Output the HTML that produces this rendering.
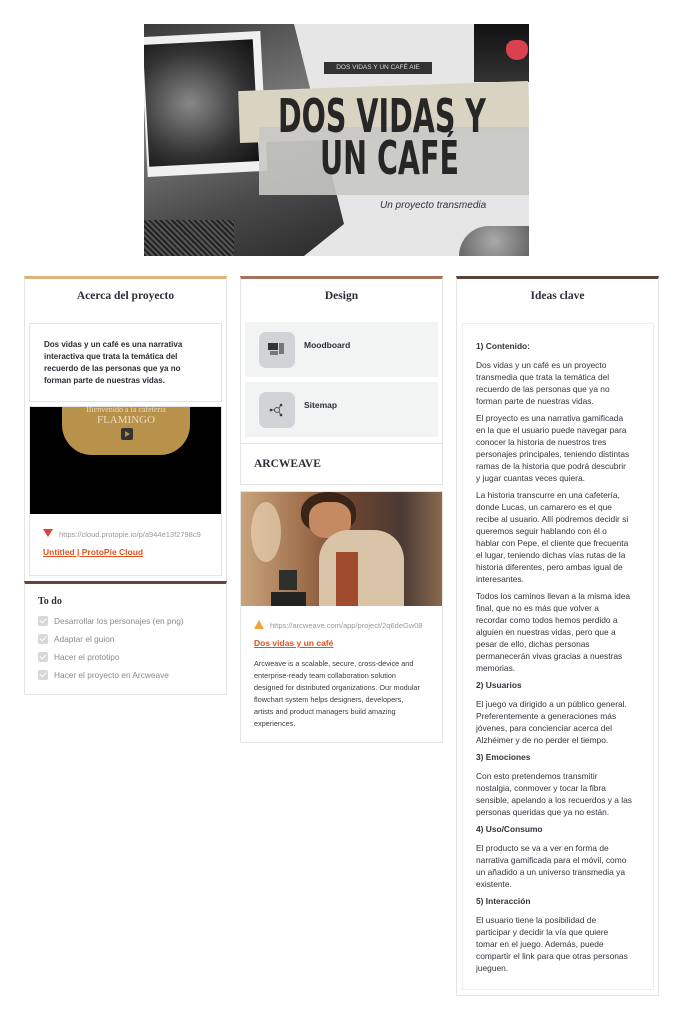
<!DOCTYPE html>
<html><head><meta charset="utf-8"><style>
*{margin:0;padding:0;box-sizing:border-box}
body{width:682px;height:1018px;background:#fff;position:relative;font-family:"Liberation Sans",sans-serif;color:#2a2c33;overflow:hidden}
.a{position:absolute}
.card{position:absolute;background:#fff;border:1px solid #e4e4e4}
.h{font-family:"Liberation Serif",serif;font-weight:bold;font-size:11.5px;text-align:center;color:#2d2f38}
.t{font-size:8.4px;line-height:12px;white-space:nowrap;color:#33353c}
.t p{margin-bottom:5px}
.t b{display:block;margin-bottom:7px;margin-top:0}
.todo{font-size:8.3px;color:#8a8a8a;white-space:nowrap}
.cb{display:inline-block;width:10px;height:10px;background:#d8d8d8;border-radius:2px;vertical-align:middle;margin-right:6px;position:relative;top:-1px}
.cb:after{content:"";position:absolute;left:3px;top:1px;width:3px;height:5px;border:solid #fff;border-width:0 1.5px 1.5px 0;transform:rotate(45deg)}
.big{font-family:'DejaVu Sans',sans-serif;font-weight:bold;font-size:46px;line-height:44px;color:#262626;transform:scaleX(.62);transform-origin:left;white-space:nowrap}
</style></head><body>

<!-- Banner -->
<div class="a" style="left:144px;top:24px;width:385px;height:232px;background:#e6e6e6;overflow:hidden">
  <div class="a" style="left:0;top:0;width:200px;height:232px;background:linear-gradient(160deg,#3a3a3a,#777 40%,#4a4a4a 70%,#2a2a2a);clip-path:polygon(0 0,150px 0,200px 200px,160px 232px,0 232px)"></div>
  <div class="a" style="left:0;top:10px;width:120px;height:140px;background:#f0f0f0;transform:rotate(-3deg)"></div>
  <div class="a" style="left:2px;top:18px;width:110px;height:122px;background:radial-gradient(ellipse at 40% 50%,#888,#333 60%,#111);transform:rotate(-3deg)"></div>
  <div class="a" style="left:0;top:196px;width:90px;height:36px;background:repeating-linear-gradient(45deg,#222 0 2px,#555 2px 4px)"></div>
  <div class="a" style="right:0;top:0;width:55px;height:58px;background:linear-gradient(180deg,#111,#333)"></div>
  <div class="a" style="left:362px;top:16px;width:22px;height:20px;background:#d94050;border-radius:40% 40% 50% 50%"></div>
  <div class="a" style="right:0;bottom:0;width:70px;height:30px;background:radial-gradient(circle,#aaa,#666);border-radius:40px 0 0 0"></div>
  <div class="a" style="left:180px;top:38px;width:108px;height:12px;background:#333;color:#ddd;font-size:6.5px;line-height:12px;text-align:center">DOS VIDAS Y UN CAFÉ AIE</div>
  <div class="a" style="left:95px;top:62px;width:290px;height:52px;background:#d9d4c2;transform:rotate(-2deg)"></div>
  <div class="a" style="left:115px;top:103px;width:270px;height:68px;background:#c8c8c4;opacity:.9"></div>
  <div class="a big" style="left:134px;top:70px">DOS VIDAS Y</div>
  <div class="a big" style="left:176px;top:112px">UN CAFÉ</div>
  <div class="a" style="left:236px;top:176px;font-size:10px;color:#333;white-space:nowrap;font-style:italic">Un proyecto transmedia</div>
</div>

<!-- Column 1 -->
<div class="card" style="left:24px;top:276px;width:203px;height:307px;border-top:3px solid #dbb37c">
  <div class="h" style="margin-top:11px">Acerca del proyecto</div>
</div>
<div class="card" style="left:29px;top:323px;width:193px;height:79px"></div>
<div class="a" style="left:44px;top:339px;font-size:8px;font-weight:bold;line-height:12px;white-space:nowrap;color:#2a2c33">Dos vidas y un café es una narrativa<br>interactiva que trata la temática del<br>recuerdo de las personas que ya no<br>forman parte de nuestras vidas.</div>
<div class="card" style="left:29px;top:406px;width:193px;height:170px"></div>
<div class="a" style="left:30px;top:407px;width:191px;height:107px;background:#000;overflow:hidden">
  <div class="a" style="left:32px;top:-10px;width:128px;height:58px;background:#b8914a;border-radius:0 0 30px 30px"></div>
  <div class="a" style="left:32px;top:-2px;width:128px;text-align:center;color:#ecdcb8;font-family:'Liberation Serif',serif;font-size:8px;line-height:10px">Bienvenido a la cafetería<br><span style="font-size:11px">FLAMINGO</span></div>
  <div class="a" style="left:91px;top:21px;width:12px;height:12px;background:#333;border-radius:2px"></div>
  <div class="a" style="left:95px;top:24px;width:0;height:0;border-left:5px solid #b8914a;border-top:3px solid transparent;border-bottom:3px solid transparent"></div>
</div>
<div class="a" style="left:43px;top:529px;width:0;height:0;border-left:5px solid transparent;border-right:5px solid transparent;border-top:8px solid #e0403a"></div>
<div class="a" style="left:59px;top:530px;font-size:7.5px;color:#999;white-space:nowrap;width:150px;overflow:hidden">https://cloud.protopie.io/p/a944e13f2798c9</div>
<div class="a" style="left:43px;top:547px;font-size:8.5px;color:#e0531f;text-decoration:underline;font-weight:bold">Untitled | ProtoPie Cloud</div>
<div class="card" style="left:24px;top:581px;width:203px;height:114px;border-top:3px solid #6a4438"></div>
<div class="a" style="left:38px;top:596px;font-family:'Liberation Serif',serif;font-weight:bold;font-size:10px;color:#2d2f38">To do</div>
<div class="a todo" style="left:38px;top:616px"><span class="cb"></span>Desarrollar los personajes (en png)</div>
<div class="a todo" style="left:38px;top:634px"><span class="cb"></span>Adaptar el guion</div>
<div class="a todo" style="left:38px;top:652px"><span class="cb"></span>Hacer el prototipo</div>
<div class="a todo" style="left:38px;top:670px"><span class="cb"></span>Hacer el proyecto en Arcweave</div>

<!-- Column 2 -->
<div class="card" style="left:240px;top:276px;width:203px;height:168px;border-top:3px solid #a8735e">
  <div class="h" style="margin-top:11px">Design</div>
</div>
<div class="a" style="left:245px;top:322px;width:193px;height:55px;background:#f2f3f3"></div>
<div class="a" style="left:259px;top:332px;width:36px;height:36px;background:#d2d3d6;border-radius:7px"></div>
<div class="a" style="left:268px;top:343px;width:10px;height:7px;background:#333"></div>
<div class="a" style="left:279px;top:343px;width:5px;height:11px;background:#777"></div>
<div class="a" style="left:270px;top:351px;width:8px;height:4px;background:#777"></div>
<div class="a" style="left:304px;top:340px;font-size:8.5px;font-weight:bold;color:#2d2f38">Moodboard</div>
<div class="a" style="left:245px;top:382px;width:193px;height:55px;background:#f2f3f3"></div>
<div class="a" style="left:259px;top:392px;width:36px;height:36px;background:#d2d3d6;border-radius:7px"></div>
<svg class="a" style="left:267px;top:400px" width="20" height="20" viewBox="0 0 20 20"><circle cx="10" cy="10" r="2.5" fill="none" stroke="#555" stroke-width="1"/><g fill="#333"><circle cx="4" cy="10" r="1.3"/><circle cx="14" cy="5" r="1.3"/><circle cx="14" cy="15" r="1.3"/></g><path d="M5 10h3M12 8l2-3M12 12l2 3" stroke="#555"/></svg>
<div class="a" style="left:304px;top:400px;font-size:8.5px;font-weight:bold;color:#2d2f38">Sitemap</div>
<div class="card" style="left:240px;top:443px;width:203px;height:42px"></div>
<div class="a" style="left:254px;top:458px;font-family:'Liberation Serif',serif;font-weight:bold;font-size:11.5px;color:#2d2f38">ARCWEAVE</div>
<div class="card" style="left:240px;top:491px;width:203px;height:252px"></div>
<div class="a" style="left:241px;top:492px;width:201px;height:114px;background:linear-gradient(90deg,#c9a47c 0%,#a2724e 30%,#6b4430 55%,#4b3a34 80%,#8a6a4e 100%);overflow:hidden">
  <div class="a" style="left:60px;top:0;width:55px;height:40px;background:#3a2418;border-radius:50% 50% 40% 40%"></div>
  <div class="a" style="left:68px;top:10px;width:42px;height:36px;background:#c58a62;border-radius:40%"></div>
  <div class="a" style="left:78px;top:38px;width:85px;height:76px;background:#d9c4a8;border-radius:30px 30px 0 0"></div>
  <div class="a" style="left:95px;top:60px;width:22px;height:54px;background:#a04a2e"></div>
  <div class="a" style="left:38px;top:78px;width:18px;height:20px;background:#2e302c"></div>
  <div class="a" style="left:30px;top:100px;width:35px;height:14px;background:#23241f"></div>
  <div class="a" style="left:10px;top:10px;width:30px;height:60px;background:#efdcc0;opacity:.6;border-radius:50%"></div>
</div>
<div class="a" style="left:254px;top:620px;width:0;height:0;border-left:5px solid transparent;border-right:5px solid transparent;border-bottom:9px solid #f0a43a"></div>
<div class="a" style="left:270px;top:621px;font-size:7.5px;color:#999;white-space:nowrap;width:160px;overflow:hidden">https://arcweave.com/app/project/2q6deGw08</div>
<div class="a" style="left:254px;top:638px;font-size:8.5px;color:#e0531f;text-decoration:underline;font-weight:bold">Dos vidas y un café</div>
<div class="a" style="left:254px;top:658px;font-size:7.3px;line-height:12px;color:#3a3c44;white-space:nowrap">Arcweave is a scalable, secure, cross-device and<br>enterprise-ready team collaboration solution<br>designed for distributed organizations. Our modular<br>flowchart system helps designers, developers,<br>artists and product managers build amazing<br>experiences.</div>

<!-- Column 3 -->
<div class="card" style="left:456px;top:276px;width:203px;height:720px;border-top:3px solid #5a4238">
  <div class="h" style="margin-top:11px">Ideas clave</div>
</div>
<div class="card" style="left:462px;top:323px;width:192px;height:667px;border-color:#eee"></div>
<div class="a t" style="left:476px;top:340px">
<b>1) Contenido:</b>
<p>Dos vidas y un café es un proyecto<br>transmedia que trata la temática del<br>recuerdo de las personas que ya no<br>forman parte de nuestras vidas.</p>
<p>El proyecto es una narrativa gamificada<br>en la que el usuario puede navegar para<br>conocer la historia de nuestros tres<br>personajes principales, teniendo distintas<br>ramas de la historia que podrá descubrir<br>y jugar cuantas veces quiera.</p>
<p>La historia transcurre en una cafetería,<br>donde Lucas, un camarero es el que<br>recibe al usuario. Allí podremos decidir si<br>queremos seguir hablando con él o<br>hablar con Pepe, el cliente que frecuenta<br>el lugar, teniendo dichas vías rutas de la<br>historia diferentes, pero ambas igual de<br>interesantes.</p>
<p>Todos los caminos llevan a la misma idea<br>final, que no es más que volver a<br>recordar como todos hemos perdido a<br>alguien en nuestras vidas, pero que a<br>pesar de ello, dichas personas<br>permanecerán vivas gracias a nuestras<br>memorias.</p>
<b>2) Usuarios</b>
<p>El juego va dirigido a un público general.<br>Preferentemente a generaciones más<br>jóvenes, para concienciar acerca del<br>Alzhéimer y de no perder el tiempo.</p>
<b>3) Emociones</b>
<p>Con esto pretendemos transmitir<br>nostalgia, conmover y tocar la fibra<br>sensible, apelando a los recuerdos y a las<br>personas queridas que ya no están.</p>
<b>4) Uso/Consumo</b>
<p>El producto se va a ver en forma de<br>narrativa gamificada para el móvil, como<br>un añadido a un universo transmedia ya<br>existente.</p>
<b>5) Interacción</b>
<p>El usuario tiene la posibilidad de<br>participar y decidir la vía que quiere<br>tomar en el juego. Además, puede<br>compartir el link para que otras personas<br>jueguen.</p>
</div>
</body></html>
